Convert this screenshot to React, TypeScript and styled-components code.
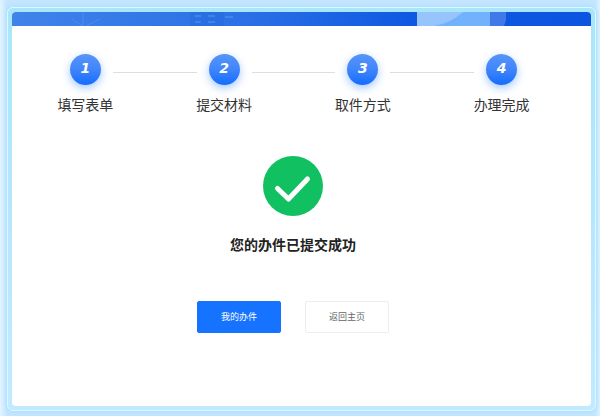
import React from "react";
import styled, { createGlobalStyle } from "styled-components";

const GlobalStyle = createGlobalStyle`
  *, *::before, *::after { box-sizing: border-box; }
  html, body, #root { height: 100%; }
  body {
    margin: 0;
    background: #ccecff;
    font-family: "Noto Sans CJK SC", sans-serif;
    color: #333;
  }
`;

const Page = styled.div`
  min-height: 100%;
  display: flex;
  padding: 7px 4px 5px 7px;
  background: linear-gradient(90deg, #e2f5ff 0, #c3e5ff 7px, #c3e5ff calc(100% - 5px), #dcf3ff 100%);
`;

const Frame = styled.div`
  flex: 1;
  display: flex;
  padding: 4px;
  border: 1px solid #d8fbff;
  border-radius: 6px;
  background: linear-gradient(180deg, #a9e6fa 0%, #b6e6fe 50%, #c2eaff 100%);
  box-shadow: 0 0 4px #a6d6fc;
`;

const Panel = styled.main`
  flex: 1;
  display: flex;
  flex-direction: column;
  overflow: hidden;
  border-radius: 4px;
  background: #fff;
`;

const Banner = styled.header`
  height: 14px;
  flex: none;
  background: linear-gradient(90deg, #4083e9 0%, #2b70e6 40%, #0e58e2 70%, #0b55e0 100%);
`;

const BannerArt = styled.svg`
  display: block;
  width: 100%;
  height: 100%;
`;

const Steps = styled.ol`
  display: grid;
  grid-template-columns: repeat(4, 1fr);
  margin: 0;
  padding: 28px 20px 0 4px;
  list-style: none;
`;

const Step = styled.li`
  display: grid;
  grid-template-columns: 1fr 31px 1fr;
  row-gap: 9px;
  align-items: center;
`;

const Line = styled.span<{ $side: "before" | "after"; $hidden?: boolean }>`
  height: 1px;
  margin-top: 6px;
  background: ${(p) => (p.$hidden ? "transparent" : "#d9dfe4")};
  margin-left: ${(p) => (p.$side === "after" ? "12px" : "0")};
  margin-right: ${(p) => (p.$side === "before" ? "12px" : "0")};
`;

const StepNumber = styled.span`
  height: 31px;
  padding-bottom: 4px;
  display: flex;
  align-items: center;
  justify-content: center;
  border-radius: 50%;
  background: linear-gradient(180deg, #5795f8 0%, #4085fb 50%, #126cff 100%);
  box-shadow: 0 3px 8px rgba(50, 130, 255, 0.45);
  color: #fff;
  font: italic 700 14px/20px "DejaVu Sans", sans-serif;
`;

const StepLabel = styled.span`
  grid-column: 1 / -1;
  text-align: center;
  font-size: 14px;
  line-height: 20px;
`;

const Result = styled.section`
  display: flex;
  flex-direction: column;
  align-items: center;
  padding: 41px 17px 0 0;
`;

const Check = styled.svg`
  display: block;
  width: 62px;
  height: 62px;
`;

const Title = styled.h1`
  margin: 15px 0 0;
  font-size: 14px;
  line-height: 24px;
  font-weight: 700;
  color: #222;
`;

const Actions = styled.div`
  display: flex;
  gap: 24px;
  margin-top: 45px;
`;

const Button = styled.button<{ $primary?: boolean }>`
  width: 84px;
  height: 32px;
  padding: 0;
  border: 1px solid ${(p) => (p.$primary ? "#1673ff" : "#ededed")};
  border-radius: 2px;
  background: ${(p) => (p.$primary ? "#1673ff" : "#fff")};
  color: ${(p) => (p.$primary ? "#fff" : "#666")};
  font-family: inherit;
  font-size: 9px;
  line-height: 16px;
  cursor: pointer;
`;

const steps = ["填写表单", "提交材料", "取件方式", "办理完成"];

export default function App() {
  return (
    <>
      <GlobalStyle />
      <Page>
        <Frame>
          <Panel>
            <Banner>
              <BannerArt viewBox="0 0 579 14" preserveAspectRatio="none" aria-hidden="true">
                <path d="M71 0v14M60 7l10 7M88 7l-14 7" stroke="#6ba0f0" strokeOpacity="0.4" fill="none" />
                <path d="M178 0h34v14h-34z" fill="#1c60d6" fillOpacity="0.25" />
                <path d="M183 4h6M196 4h7M183 10h6M196 10h7M213 5h8" stroke="#6ba0f0" strokeOpacity="0.4" strokeWidth="2" />
                <path d="M405 0h73v14h-73z" fill="#72b1fb" />
                <path d="M405 0h46q-12 11-29 14h-17z" fill="#97c5fb" />
                <path d="M478 0h16v8l-2 6h-14z" fill="#4079e8" />
              </BannerArt>
            </Banner>
            <Steps>
              {steps.map((label, i) => (
                <Step key={label}>
                  <Line $side="before" $hidden={i === 0} />
                  <StepNumber>{i + 1}</StepNumber>
                  <Line $side="after" $hidden={i === steps.length - 1} />
                  <StepLabel>{label}</StepLabel>
                </Step>
              ))}
            </Steps>
            <Result>
              <Check viewBox="0 0 62 62" aria-hidden="true">
                <circle cx="31" cy="31" r="30" fill="#11c161" />
                <path d="M15.500 33.500l11 10.500 19-20" fill="none" stroke="#fff" strokeWidth="5" strokeLinecap="round" strokeLinejoin="round" />
              </Check>
              <Title>您的办件已提交成功</Title>
              <Actions>
                <Button type="button" $primary>我的办件</Button>
                <Button type="button">返回主页</Button>
              </Actions>
            </Result>
          </Panel>
        </Frame>
      </Page>
    </>
  );
}
